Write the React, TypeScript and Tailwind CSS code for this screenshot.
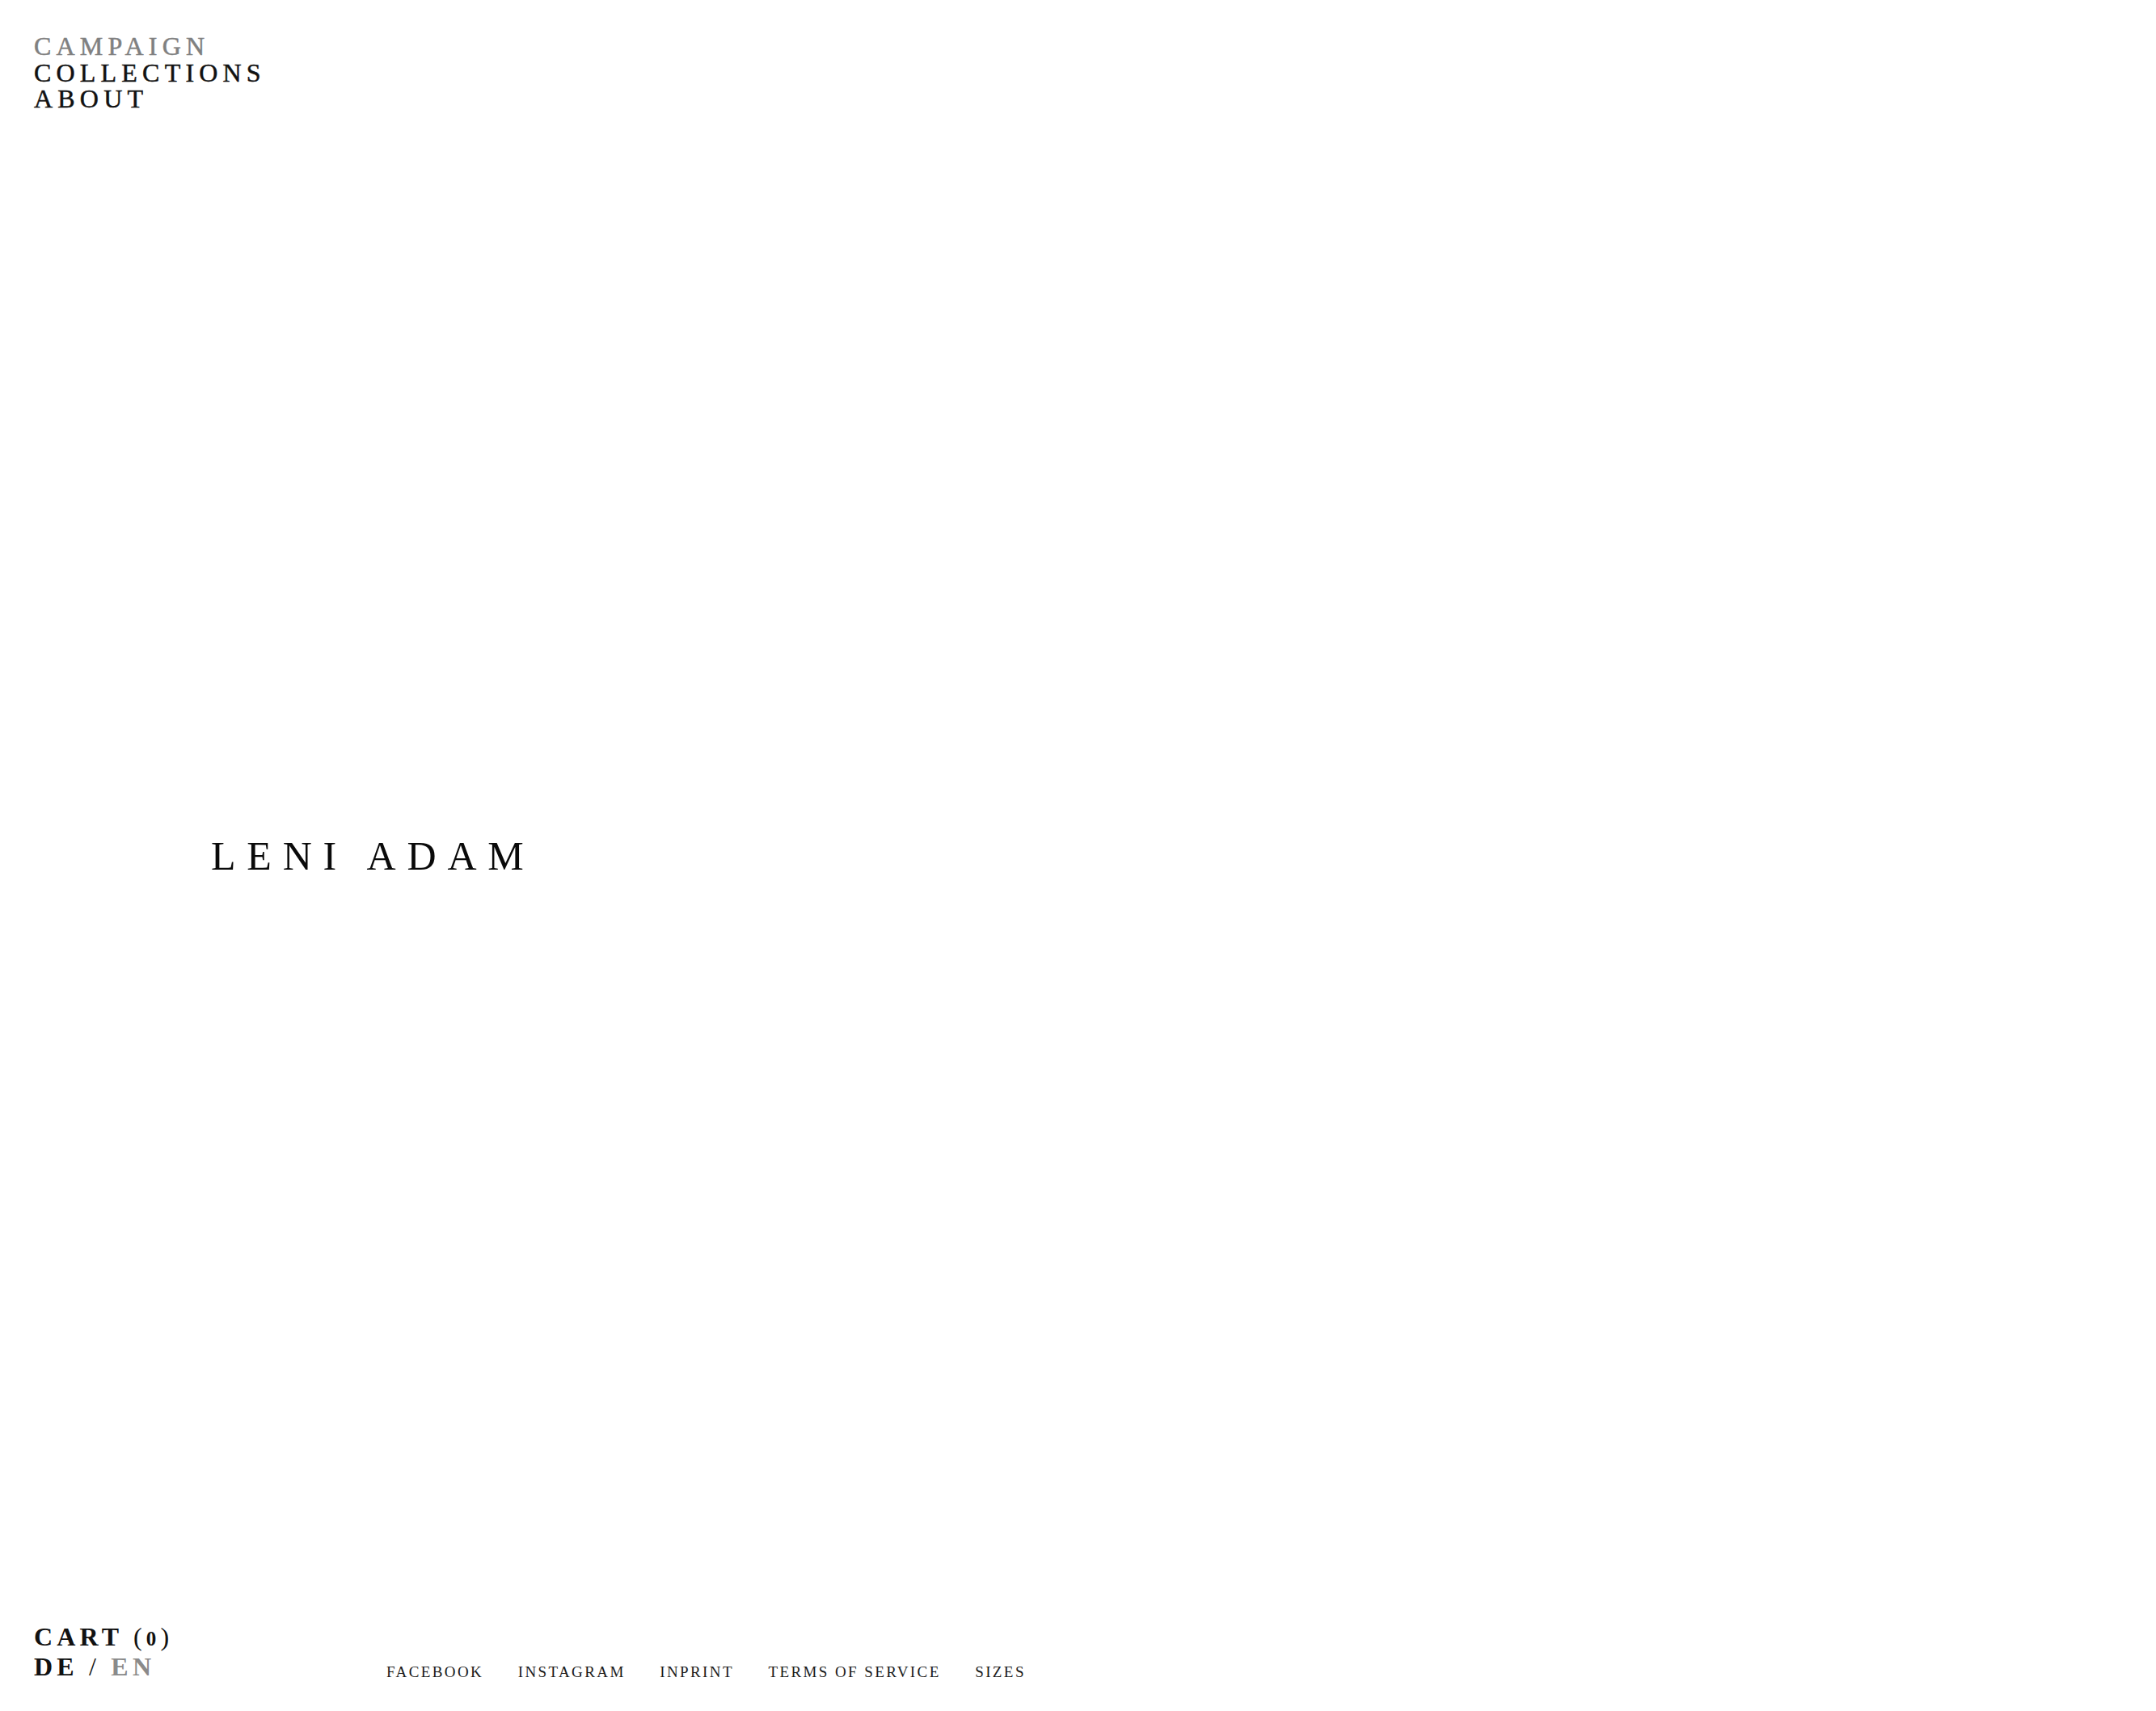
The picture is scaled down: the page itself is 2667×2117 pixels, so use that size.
const serif = "font-['Liberation_Serif','Times_New_Roman',serif]";

const menu = [
  { label: "Campaign", muted: true },
  { label: "Collections", muted: false },
  { label: "About", muted: false },
];

const links = ["Facebook", "Instagram", "Inprint", "Terms of Service", "Sizes"];

export default function App() {
  return (
    <div className={`flex min-h-[2117px] flex-col bg-white text-[#111] ${serif}`}>
      <header className="pl-[42px] pt-[41px]">
        <nav className="flex flex-col text-[32px] uppercase leading-[32.5px] tracking-[6.2px] [-webkit-text-stroke:0.5px_currentColor]">
          {menu.map((item) => (
            <a key={item.label} href="#" className={item.muted ? "text-[#808080]" : "text-[#111]"}>
              {item.label}
            </a>
          ))}
        </nav>
      </header>

      <main className="flex flex-1 items-center pb-[28px] pl-[261px]">
        <h1 className="text-[50px] font-normal uppercase leading-none tracking-[13.8px] text-[#0a0a0a]">
          Leni Adam
        </h1>
      </main>

      <footer className="flex items-end pb-[37px] pl-[42px]">
        <div className="flex w-[436px] flex-col text-[32px] uppercase leading-[35px] tracking-[5.2px]">
          <a href="#" className="font-bold">
            Cart <span className="font-normal">(</span>
            <span className="text-[25px]">0</span>
            <span className="font-normal">)</span>
          </a>
          <div>
            <a href="#" className="font-bold">DE</a>{" "}
            <span className="font-normal">/</span>{" "}
            <a href="#" className="font-bold text-[#8a8a8a]">EN</a>
          </div>
        </div>
        <ul className="flex gap-[42.5px] text-[19px] uppercase leading-[23px] tracking-[2.4px] text-[#1a1a1a]">
          {links.map((l) => (
            <li key={l}>
              <a href="#">{l}</a>
            </li>
          ))}
        </ul>
      </footer>
    </div>
  );
}
